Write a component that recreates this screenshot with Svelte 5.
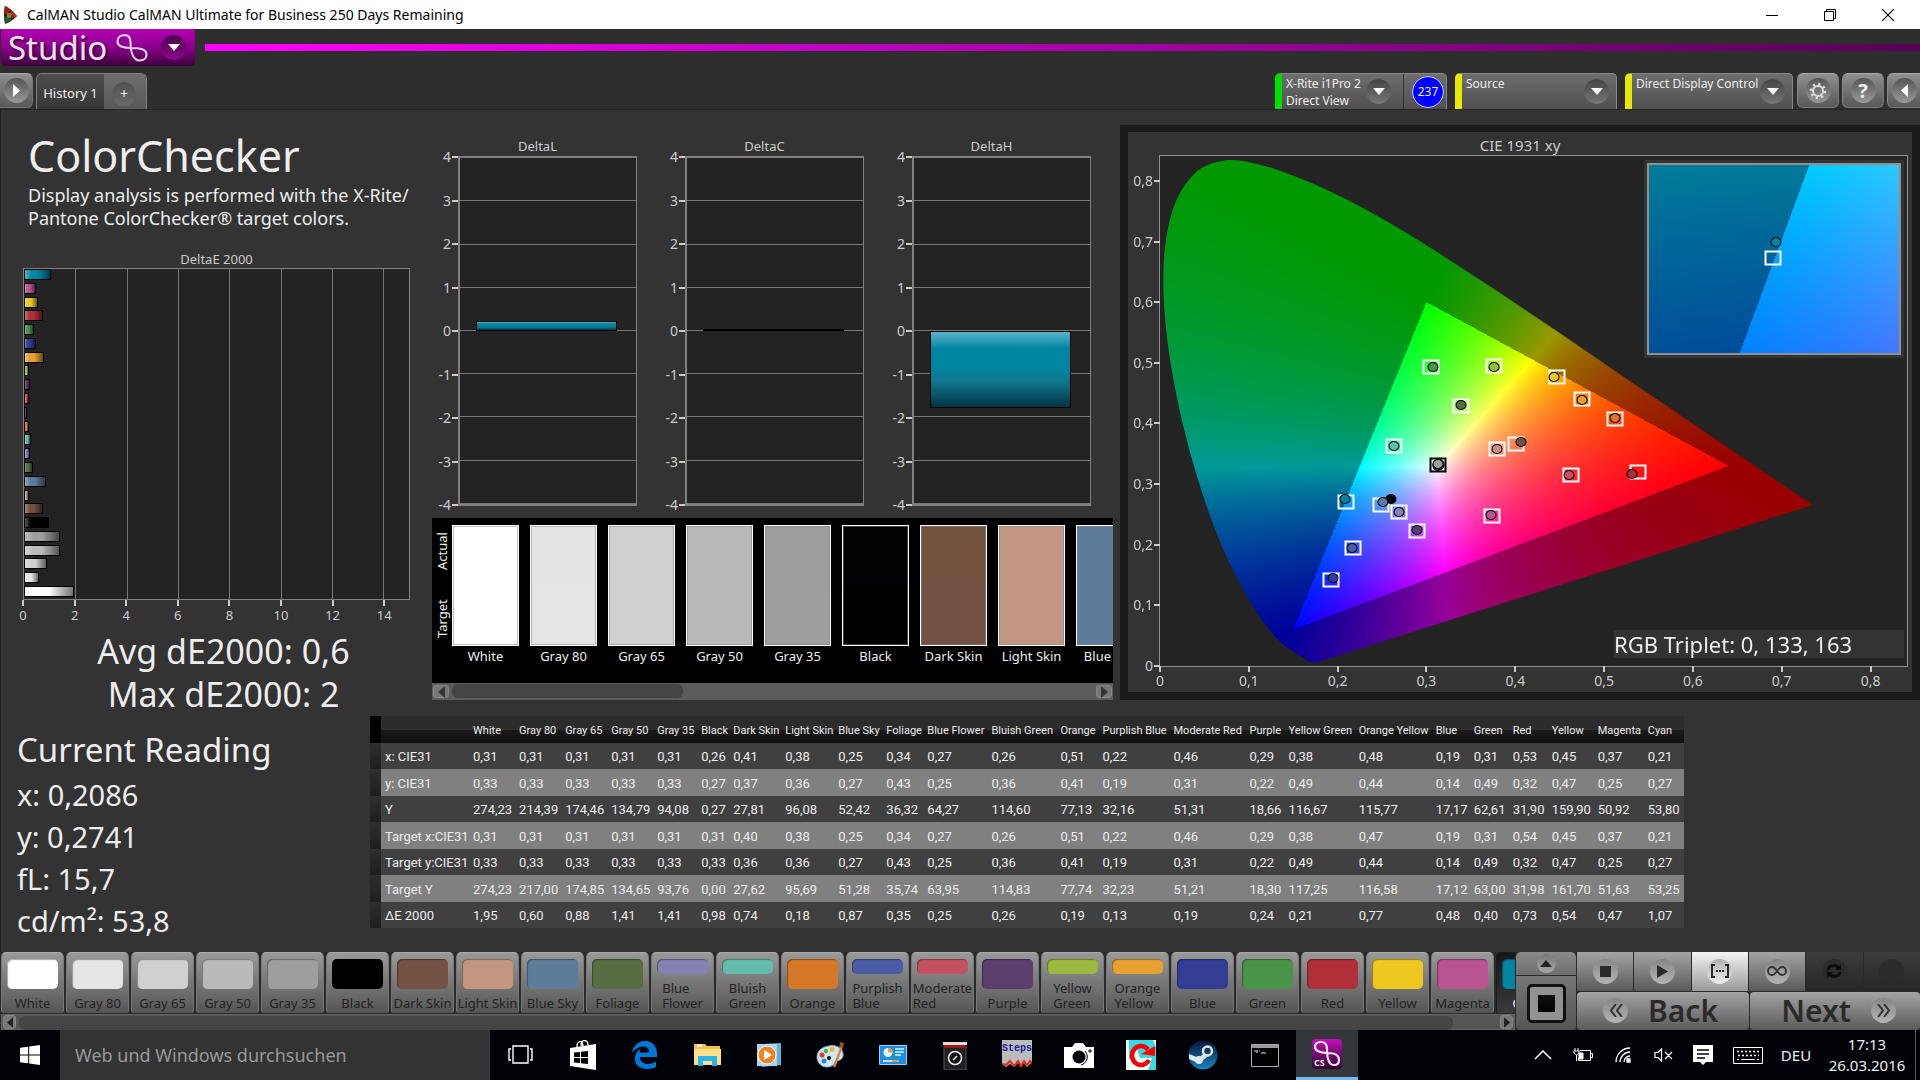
<script lang="ts">
    interface Patch {
        name: string;
        color: string;
        actual?: string;
        col: number;
        values: string[];
        target?: [number, number];
        dot: [number, number];
    }

    interface View {
        x: number;
        y: number;
        w: number;
        h: number;
    }

    const patches: Patch[] = [
        { name: "White", color: "#ffffff", col: 46, values: ["0,31", "0,33", "274,23", "0,31", "0,33", "274,23", "1,95"], dot: [0.313, 0.33] },
        { name: "Gray 80", color: "#e5e5e5", actual: "#e4e5e3", col: 46, values: ["0,31", "0,33", "214,39", "0,31", "0,33", "217,00", "0,60"], dot: [0.313, 0.331] },
        { name: "Gray 65", color: "#d0d0d0", col: 46, values: ["0,31", "0,33", "174,46", "0,31", "0,33", "174,85", "0,88"], dot: [0.314, 0.332] },
        { name: "Gray 50", color: "#bababa", actual: "#b8bbb8", col: 46, values: ["0,31", "0,33", "134,79", "0,31", "0,33", "134,65", "1,41"], dot: [0.314, 0.333] },
        { name: "Gray 35", color: "#9e9e9e", actual: "#9c9f9b", col: 44, values: ["0,31", "0,33", "94,08", "0,31", "0,33", "93,76", "1,41"], target: [0.3128, 0.331], dot: [0.3128, 0.333] },
        { name: "Black", color: "#000000", actual: "#010204", col: 32, values: ["0,26", "0,27", "0,27", "0,31", "0,33", "0,00", "0,98"], dot: [0.26, 0.276] },
        { name: "Dark Skin", color: "#735244", actual: "#735340", col: 52, values: ["0,41", "0,37", "27,81", "0,40", "0,36", "27,62", "0,74"], target: [0.4007, 0.3654], dot: [0.4064, 0.3697] },
        { name: "Light Skin", color: "#c39682", col: 53, values: ["0,38", "0,36", "96,08", "0,38", "0,36", "95,69", "0,18"], target: [0.3795, 0.3586], dot: [0.3795, 0.3586] },
        { name: "Blue Sky", color: "#5e7b9c", col: 48, values: ["0,25", "0,27", "52,42", "0,25", "0,27", "51,28", "0,87"], target: [0.2491, 0.2661], dot: [0.2509, 0.2705] },
        { name: "Foliage", color: "#586c43", col: 41, values: ["0,34", "0,43", "36,32", "0,34", "0,43", "35,74", "0,35"], target: [0.3387, 0.4287], dot: [0.3387, 0.4305] },
        { name: "Blue Flower", color: "#8581b3", col: 64, values: ["0,27", "0,25", "64,27", "0,27", "0,25", "63,95", "0,25"], target: [0.2692, 0.2543], dot: [0.2692, 0.2543] },
        { name: "Bluish Green", color: "#64bcaa", col: 69, values: ["0,26", "0,36", "114,60", "0,26", "0,36", "114,83", "0,26"], target: [0.2635, 0.3635], dot: [0.2635, 0.3635] },
        { name: "Orange", color: "#d67827", col: 42, values: ["0,51", "0,41", "77,13", "0,51", "0,41", "77,74", "0,19"], target: [0.512, 0.407], dot: [0.5126, 0.4094] },
        { name: "Purplish Blue", color: "#4a5ca5", col: 71, values: ["0,22", "0,19", "32,16", "0,22", "0,19", "32,23", "0,13"], target: [0.217, 0.1942], dot: [0.2164, 0.1954] },
        { name: "Moderate Red", color: "#c2525f", col: 76, values: ["0,46", "0,31", "51,31", "0,46", "0,31", "51,21", "0,19"], target: [0.4627, 0.3145], dot: [0.4604, 0.3145] },
        { name: "Purple", color: "#5c3e6c", col: 39, values: ["0,29", "0,22", "18,66", "0,29", "0,22", "18,30", "0,24"], target: [0.2893, 0.2227], dot: [0.2893, 0.2246] },
        { name: "Yellow Green", color: "#9cb93f", col: 70, values: ["0,38", "0,49", "116,67", "0,38", "0,49", "117,25", "0,21"], target: [0.376, 0.495], dot: [0.376, 0.4925] },
        { name: "Orange Yellow", color: "#e7a130", col: 77, values: ["0,48", "0,44", "115,77", "0,47", "0,44", "116,58", "0,77"], target: [0.4747, 0.441], dot: [0.4747, 0.439] },
        { name: "Blue", color: "#333d94", col: 38, values: ["0,19", "0,14", "17,17", "0,19", "0,14", "17,12", "0,48"], target: [0.1923, 0.142], dot: [0.1952, 0.1452] },
        { name: "Green", color: "#489448", col: 39, values: ["0,31", "0,49", "62,61", "0,31", "0,49", "63,00", "0,40"], target: [0.305, 0.4925], dot: [0.307, 0.4925] },
        { name: "Red", color: "#b02f39", col: 39, values: ["0,53", "0,32", "31,90", "0,54", "0,32", "31,98", "0,73"], target: [0.5379, 0.3195], dot: [0.5316, 0.317] },
        { name: "Yellow", color: "#ecc821", col: 46, values: ["0,45", "0,47", "159,90", "0,45", "0,47", "161,70", "0,54"], target: [0.4466, 0.4758], dot: [0.444, 0.477] },
        { name: "Magenta", color: "#ba5391", col: 50, values: ["0,37", "0,25", "50,92", "0,37", "0,25", "51,63", "0,47"], target: [0.3743, 0.2475], dot: [0.3726, 0.2494] },
        { name: "Cyan", color: "#0085a3", col: 40, values: ["0,21", "0,27", "53,80", "0,21", "0,27", "53,25", "1,07"], target: [0.209, 0.271], dot: [0.2078, 0.2754] },
    ];

    const rowNames = ["x: CIE31", "y: CIE31", "Y", "Target x:CIE31", "Target y:CIE31", "Target Y", "ΔE 2000"];
    const toNumber = (text: string) => Number(text.replace(",", "."));
    const bars = [...patches].reverse().map((p) => ({ color: p.color, value: toNumber(p.values[6]) }));
    const twoLines = ["Blue Flower", "Bluish Green", "Purplish Blue", "Moderate Red", "Yellow Green", "Orange Yellow"];

    const deltas = [
        { name: "DeltaL", value: 0.24 },
        { name: "DeltaC", value: 0.04 },
        { name: "DeltaH", value: -1.78 },
    ];
    const deltaTicks = [4, 3, 2, 1, 0, -1, -2, -3, -4];
    const errorTicks = [0, 2, 4, 6, 8, 10, 12, 14];
    const cieTicks = [0, 1, 2, 3, 4, 5, 6, 7, 8];
    const cieView: View = { x: 0, y: 0, w: 0.841, h: 0.841 };
    const insetView: View = { x: 0.1789, y: 0.2399, w: 0.058, h: 0.058 };

    const readings = ["x: 0,2086", "y: 0,2741", "fL: 15,7", "cd/m²: 53,8"];

    // spectral locus, 380 nm to 700 nm
    const locus = [
        0.1741, 0.005, 0.1733, 0.0048, 0.1714, 0.0051, 0.1689, 0.0069, 0.1644, 0.0109, 0.1566, 0.0177, 0.144, 0.0297,
        0.1355, 0.0399, 0.1241, 0.0578, 0.1096, 0.0868, 0.0913, 0.1327, 0.0687, 0.2007, 0.0454, 0.295, 0.0235, 0.4127,
        0.0082, 0.5384, 0.0039, 0.6548, 0.0139, 0.7502, 0.0389, 0.812, 0.0743, 0.8338, 0.1142, 0.8262, 0.1547, 0.8059,
        0.1929, 0.7816, 0.2296, 0.7543, 0.2658, 0.7243, 0.3016, 0.6923, 0.3373, 0.6589, 0.3731, 0.6245, 0.4087, 0.5896,
        0.4441, 0.5547, 0.4788, 0.5202, 0.5125, 0.4866, 0.5448, 0.4544, 0.5752, 0.4242, 0.6029, 0.3965, 0.627, 0.3725,
        0.6658, 0.334, 0.6915, 0.3083, 0.7079, 0.292, 0.719, 0.2809, 0.726, 0.274, 0.7347, 0.2653,
    ];

    function paintGamut(canvas: HTMLCanvasElement, view: View) {
        const ctx = canvas.getContext("2d")!;
        const { width, height } = canvas;
        const image = ctx.createImageData(width, height);

        for (let py = 0; py < height; py++) {
            for (let px = 0; px < width; px++) {
                const x = view.x + ((px + 0.5) / width) * view.w;
                const y = view.y + (1 - (py + 0.5) / height) * view.h;
                const z = 1 - x - y;
                const r = 3.2406 * x - 1.5372 * y - 0.4986 * z;
                const g = -0.9689 * x + 1.8758 * y + 0.0415 * z;
                const b = 0.0557 * x - 0.204 * y + 1.057 * z;
                // colours outside sRGB are dimmed
                const level = (Math.min(r, g, b) < 0 ? 153 : 255) / Math.max(r, g, b);
                const i = (py * width + px) * 4;
                image.data[i] = r * level;
                image.data[i + 1] = g * level;
                image.data[i + 2] = b * level;
                image.data[i + 3] = 255;
            }
        }
        ctx.putImageData(image, 0, 0);

        const points: [number, number][] = [];
        for (let i = 0; i < locus.length; i += 2) {
            points.push([
                ((locus[i] - view.x) / view.w) * width,
                (1 - (locus[i + 1] - view.y) / view.h) * height,
            ]);
        }

        ctx.globalCompositeOperation = "destination-in";
        ctx.beginPath();
        ctx.moveTo(...points[0]);
        for (let i = 0; i < points.length - 1; i++) {
            const a = points[Math.max(i - 1, 0)];
            const b = points[i];
            const c = points[i + 1];
            const d = points[Math.min(i + 2, points.length - 1)];
            ctx.bezierCurveTo(
                b[0] + (c[0] - a[0]) / 6, b[1] + (c[1] - a[1]) / 6,
                c[0] - (d[0] - b[0]) / 6, c[1] - (d[1] - b[1]) / 6,
                c[0], c[1],
            );
        }
        ctx.closePath();
        ctx.fill();
    }

    const place = ([x, y]: [number, number], view: View) =>
        `left: ${((x - view.x) / view.w) * 100}%; bottom: ${((y - view.y) / view.h) * 100}%`;
</script>

<div class="screen">
    <header class="titlebar">
        <svg width="14" height="20" viewBox="0 0 14 20">
            <path d="M2 1Q7 3 14 11Q8 17 2 19Q0 10 2 1Z" fill="#1b1b12" />
            <path d="M2 1Q5 2 8 5L4 9L1 9Q1 4 2 1Z" fill="#a01c14" />
            <path d="M8 6L14 11L10 13L7 10Z" fill="#c42a18" />
            <path d="M2 12L6 11L8 15L2 19Z" fill="#1d5c22" />
            <path d="M4 8h4v5h-4z" fill="#6b8a3a" />
        </svg>
        <h1>CalMAN Studio CalMAN Ultimate for Business 250 Days Remaining</h1>
        <button aria-label="Minimize">
            <svg width="12" height="12" viewBox="0 0 12 12"><path d="M0 6.5h12" stroke="#000" /></svg>
        </button>
        <button aria-label="Restore">
            <svg width="12" height="12" viewBox="0 0 12 12" fill="none" stroke="#000"><path d="M.5 2.5h9v9h-9zM2.5 2.5v-2h9v9h-2" /></svg>
        </button>
        <button aria-label="Close">
            <svg width="12" height="12" viewBox="0 0 12 12"><path d="M0 0L12 12M12 0L0 12" stroke="#000" stroke-width="1.2" /></svg>
        </button>
    </header>

    <div class="brand">
        <button class="studio">
            <span>Studio</span>
            <svg width="32" height="28" viewBox="0 0 32 28" fill="none" stroke="#e0cfe4" stroke-width="2.2">
                <path d="M15 14C9 14 1.500 13 1.500 7.500C1.500 3 5 1.200 8.500 1.200C12.500 1.200 14.500 4 14.500 8C14.500 15 16 26.500 24 26.500C28 26.500 30.500 24 30.500 20.500C30.500 15 24 14 15 14Z" />
            </svg>
            <i class="knob purple"><svg width="12" height="7" viewBox="0 0 12 7"><path d="M0 0h12L6 7z" fill="#fff" /></svg></i>
        </button>
        <div class="line"></div>
    </div>

    <nav class="tabs">
        <button class="square first" aria-label="Expand panel">
            <i class="knob"><svg width="7" height="13" viewBox="0 0 7 13"><path d="M0 0L7 6.500L0 13z" fill="#fff" /></svg></i>
        </button>
        <div class="history">
            <button class="tab">History 1</button>
            <button class="add" aria-label="Add history"><i>+</i></button>
        </div>
        <div class="device meter">
            <button><span>X-Rite i1Pro 2<br />Direct View</span><i class="knob dark"><svg width="12" height="7" viewBox="0 0 12 7"><path d="M0 0h12L6 7z" fill="#fff" /></svg></i></button>
            <div class="count"><b>237</b></div>
        </div>
        <div class="device source">
            <button><span>Source</span><i class="knob dark"><svg width="12" height="7" viewBox="0 0 12 7"><path d="M0 0h12L6 7z" fill="#fff" /></svg></i></button>
        </div>
        <div class="device display">
            <button><span>Direct Display Control</span><i class="knob dark"><svg width="12" height="7" viewBox="0 0 12 7"><path d="M0 0h12L6 7z" fill="#fff" /></svg></i></button>
        </div>
        <button class="square" aria-label="Settings">
            <i class="knob"><svg width="18" height="18" viewBox="0 0 18 18" fill="none" stroke="#ddd"><circle cx="9" cy="9" r="5" stroke-width="2" /><circle cx="9" cy="9" r="7" stroke-width="2.4" stroke-dasharray="2.2 3.3" /></svg></i>
        </button>
        <button class="square help" aria-label="Help"><i class="knob">?</i></button>
        <button class="square last" aria-label="Collapse panel">
            <i class="knob"><svg width="7" height="13" viewBox="0 0 7 13"><path d="M7 0L0 6.500L7 13z" fill="#fff" /></svg></i>
        </button>
    </nav>

    <main>
        <div class="top">
            <section class="summary">
                <h2>ColorChecker</h2>
                <p>Display analysis is performed with the X-Rite/<br />Pantone ColorChecker® target colors.</p>
                <div class="caption">DeltaE 2000</div>
                <div class="errors">
                    {#each errorTicks.slice(1) as tick}
                        <span class="rule" style="left: {(tick / 15) * 100}%"></span>
                    {/each}
                    {#each bars as bar}
                        <span class="bar" style="width: {(bar.value / 15) * 100}%; background-color: {bar.color}"></span>
                    {/each}
                </div>
                <div class="x-axis">
                    {#each errorTicks as tick}
                        <span style="left: {(tick / 15) * 100}%">{tick}</span>
                    {/each}
                </div>
                <div class="average">Avg dE2000: 0,6</div>
                <div class="average">Max dE2000: 2</div>
            </section>

            <section class="middle">
                <div class="deltas">
                    {#each deltas as delta}
                        <div class="delta">
                            <div class="caption">{delta.name}</div>
                            <div class="plot-row">
                                <div class="y-axis">
                                    {#each deltaTicks as tick}
                                        <span>{tick}</span>
                                    {/each}
                                </div>
                                <div class="delta-plot">
                                    <span
                                        class="column"
                                        style="height: {Math.abs(delta.value) * 12.5}%; {delta.value > 0 ? 'bottom' : 'top'}: 50%"
                                    ></span>
                                </div>
                            </div>
                        </div>
                    {/each}
                </div>
                <div class="compare">
                    <div class="sides"><span>Target</span><span>Actual</span></div>
                    <div class="swatches">
                        {#each patches.slice(0, 9) as patch}
                            <figure>
                                <div style="background: linear-gradient({patch.actual ?? patch.color} 50%, {patch.color} 50%)"></div>
                                <figcaption>{patch.name}</figcaption>
                            </figure>
                        {/each}
                    </div>
                </div>
                <div class="scroll">
                    <button aria-label="Scroll left"><svg width="7" height="12" viewBox="0 0 7 12"><path d="M7 0v12L0 6z" fill="#333" /></svg></button>
                    <div class="track"><div class="thumb" style="width: 36%"></div></div>
                    <button aria-label="Scroll right"><svg width="7" height="12" viewBox="0 0 7 12"><path d="M0 0v12L7 6z" fill="#333" /></svg></button>
                </div>
            </section>

            <section class="cie">
                <div class="cie-inner">
                    <div class="caption">CIE 1931 xy</div>
                    <div class="cie-plot">
                        <canvas width="748" height="510" use:paintGamut={cieView}></canvas>
                        {#each cieTicks as tick}
                            <span class="y-tick" style="bottom: {(tick / 8.41) * 100}%">{tick ? `0,${tick}` : "0"}</span>
                            <span class="x-tick" style="left: {(tick / 8.41) * 100}%">{tick ? `0,${tick}` : "0"}</span>
                        {/each}
                        {#each patches as patch}
                            {#if patch.target}
                                <span class="target" class:neutral={patch.name === "Gray 35"} style={place(patch.target, cieView)}></span>
                            {/if}
                        {/each}
                        {#each patches as patch}
                            <span class="dot" style="{place(patch.dot, cieView)}; background: {patch.color}"></span>
                        {/each}
                        <div class="inset">
                            <canvas width="250" height="188" use:paintGamut={insetView}></canvas>
                            <span class="target" style={place([0.2076, 0.2691], insetView)}></span>
                            <span class="dot" style="{place([0.2083, 0.2743], insetView)}; background: #0085a3"></span>
                        </div>
                        <div class="triplet">RGB Triplet: 0, 133, 163</div>
                    </div>
                </div>
            </section>
        </div>

        <div class="data">
            <section class="reading">
                <h3>Current Reading</h3>
                {#each readings as reading}
                    <p>{reading}</p>
                {/each}
            </section>
            <table>
                <colgroup>
                    <col class="grip-col" />
                    <col class="name-col" />
                    {#each patches as patch}
                        <col style="width: {patch.col}px" />
                    {/each}
                </colgroup>
                <thead>
                    <tr>
                        <td class="grip"></td>
                        <td></td>
                        {#each patches as patch}
                            <th scope="col">{patch.name}</th>
                        {/each}
                    </tr>
                </thead>
                <tbody>
                    {#each rowNames as name, row}
                        <tr>
                            <td class="grip"></td>
                            <th scope="row">{name}</th>
                            {#each patches as patch}
                                <td>{patch.values[row]}</td>
                            {/each}
                        </tr>
                    {/each}
                </tbody>
            </table>
        </div>
    </main>

    <div class="controls">
        <div class="picker">
            <div class="patches">
                {#each patches as patch}
                    <button class:double={twoLines.includes(patch.name)} class:selected={patch.name === "Cyan"}>
                        <i style="background: {patch.color}"></i>
                        <span>{patch.name}</span>
                    </button>
                {/each}
            </div>
            <div class="scroll wide">
                <button aria-label="Scroll left"><svg width="6" height="11" viewBox="0 0 7 12"><path d="M7 0v12L0 6z" fill="#222" /></svg></button>
                <div class="track"><div class="thumb" style="width: 97%"></div></div>
                <button aria-label="Scroll right"><svg width="6" height="11" viewBox="0 0 7 12"><path d="M0 0v12L7 6z" fill="#222" /></svg></button>
            </div>
        </div>
        <div class="viewer">
            <button class="up" aria-label="Show pattern list"><i class="knob small"><svg width="12" height="7" viewBox="0 0 12 7"><path d="M0 7h12L6 0z" fill="#222" /></svg></i></button>
            <button class="pattern" aria-label="Pattern window"><i></i></button>
        </div>
        <div class="transport">
            <div class="keys">
                <button aria-label="Stop"><i class="knob light"><svg width="11" height="11" viewBox="0 0 11 11"><path d="M0 0h11v11H0z" fill="#2a2a2a" /></svg></i></button>
                <button aria-label="Play"><i class="knob light"><svg width="12" height="13" viewBox="0 0 12 13"><path d="M1 0L12 6.500L1 13z" fill="#2a2a2a" /></svg></i></button>
                <button class="lit" aria-label="Read series"><i class="knob light"><svg width="20" height="14" viewBox="0 0 20 14" fill="none" stroke="#2a2a2a" stroke-width="2"><path d="M5 1H2v12h3M15 1h3v12h-3" /><path d="M6 7h8" stroke-dasharray="2 1" /></svg></i></button>
                <button aria-label="Read continuous"><i class="knob light"><svg width="20" height="10" viewBox="0 0 20 10" fill="none" stroke="#333" stroke-width="1.8"><path d="M10 5C8 2 7 1 5 1a4 4 0 0 0 0 8C7 9 8 8 10 5C12 2 13 1 15 1a4 4 0 0 1 0 8C13 9 12 8 10 5Z" /></svg></i></button>
                <button class="off" aria-label="Refresh" disabled><i class="knob"><svg width="16" height="16" viewBox="0 0 16 16" fill="none" stroke="#0c0c0c" stroke-width="2.8"><path d="M2 7C2.500 4 5 2.500 8 2.500C10 2.500 11.500 3.300 12.500 4.500M14 9C13.500 12 11 13.500 8 13.500C6 13.500 4.500 12.700 3.500 11.500" /><path d="M15 1v6H9zM1 15V9h6z" fill="#0c0c0c" stroke="none" /></svg></i></button>
                <button class="off" aria-label="No action" disabled><i class="knob"></i></button>
            </div>
            <div class="steps">
                <button class="back">
                    <i class="knob light"><svg width="14" height="13" viewBox="0 0 14 13" fill="none" stroke="#333" stroke-width="2"><path d="M7 0L2 6.500L7 13M13 0L8 6.500L13 13" /></svg></i>
                    <span>Back</span>
                </button>
                <button class="next">
                    <span>Next</span>
                    <i class="knob light"><svg width="14" height="13" viewBox="0 0 14 13" fill="none" stroke="#333" stroke-width="2"><path d="M1 0L6 6.500L1 13M7 0L12 6.500L7 13" /></svg></i>
                </button>
            </div>
        </div>
    </div>

    <footer class="taskbar">
        <button class="start" aria-label="Start">
            <svg width="20" height="20" viewBox="0 0 20 20" fill="#fff"><path d="M0 2.800L8.200 1.700V9.500H0zM9.200 1.500L20 0V9.500H9.200zM0 10.500H8.200V18.300L0 17.200zM9.200 10.500H20V20L9.200 18.500z" /></svg>
        </button>
        <input type="text" placeholder="Web und Windows durchsuchen" aria-label="Web und Windows durchsuchen" />
        <div class="apps">
            <button aria-label="Task view">
                <svg width="26" height="20" viewBox="0 0 26 20" fill="none" stroke="#fff" stroke-width="1.4"><path d="M5 1h15v17H5zM3 4H1v11h2M22 4h2v11h-2" /></svg>
            </button>
            <button aria-label="Store">
                <svg width="28" height="30" viewBox="0 0 28 30"><path d="M1 8L27 4V30L1 26z" fill="#fff" /><path d="M8 7C8 0 14 0 14 6M12 6C12-1 19-1 19 5" fill="none" stroke="#fff" stroke-width="1.4" /><path d="M5 12.500L11 12V17H5zM12 11.800L19 11V17H12zM5 18H11V23L5 22.500zM12 18H19V24L12 23.200z" fill="#000208" /></svg>
            </button>
            <button aria-label="Edge">
                <svg width="26" height="28" viewBox="0 0 26 28" fill="#0078d7"><path d="M0 12C1 5 6 0 13 0C21 0 25 6 25 13V16H8C8 21 12 23 16 23C19 23 22 22 24 20.500V26C22 27.300 18 28 15 28C7 28 2 23 3 16C3.500 12 6 9 9 7.500C8 9 7.700 10 7.600 11.500H17C17 8 15.500 5.500 11.500 5.500C7 5.500 3 8 0 12Z" /></svg>
            </button>
            <button aria-label="Explorer">
                <svg width="29" height="24" viewBox="0 0 29 24"><path d="M1 1h11l2 2h13v18H1z" fill="#f0c44c" /><path d="M1 6h27v16H1z" fill="#ffe08a" /><path d="M4 1.500h5v2H4z" fill="#fff" /><path d="M5 13h19v10h-5v-5h-9v5H5z" fill="#27b4ef" /></svg>
            </button>
            <button aria-label="Media player">
                <svg width="26" height="26" viewBox="0 0 26 26"><path d="M6 2l19-1v22l-19 2z" fill="#5db0d8" /><path d="M1 2h20v22H1z" fill="#a9d8ee" /><circle cx="11" cy="13" r="9" fill="#f28321" stroke="#fff" /><path d="M8 8l8 5l-8 5z" fill="#fff" /></svg>
            </button>
            <button aria-label="Paint">
                <svg width="30" height="28" viewBox="0 0 30 28"><path d="M13 5C22 3 28 9 27 15C26 20 21 19 19 21C18 24 15 26 11 26C5 26 1 21 1 16C1 10 6 6 13 5Z" fill="#cfe6f7" stroke="#7fb0d4" /><circle cx="6" cy="14" r="2.500" fill="#e03a2f" /><circle cx="10" cy="10" r="2.200" fill="#53b13c" /><circle cx="16" cy="8.500" r="2.500" fill="#f6b91c" /><circle cx="8" cy="20" r="2.500" fill="#3c7fd0" /><circle cx="13" cy="17" r="2" fill="#0b1520" /><path d="M26 5L18 26" stroke="#d48c36" stroke-width="2.4" /><path d="M24 1l4 1l-1 5l-4-1z" fill="#8d5223" /></svg>
            </button>
            <button aria-label="Control panel">
                <svg width="28" height="20" viewBox="0 0 28 20"><path d="M.5.500h27v19H.5z" fill="#1f8fe0" stroke="#8ed0ff" /><circle cx="9" cy="7.500" r="4.500" fill="#e8f6ff" /><path d="M9 7.500V3a4.500 4.500 0 0 1 4.500 4.500z" fill="#f59b22" /><path d="M16 4h9M16 7h9M16 10h6" stroke="#d9f0ff" stroke-width="1.5" /><path d="M4 16h16" stroke="#fff" stroke-width="1.5" /><path d="M13 16h7" stroke="#f0a030" stroke-width="2" /></svg>
            </button>
            <button aria-label="Meter">
                <svg width="24" height="29" viewBox="0 0 24 29"><path d="M1 4h22v25H1z" fill="#242022" stroke="#555" /><path d="M0 1h24v3H0z" fill="#ddd" /><path d="M1 4h22v3H1z" fill="#9c1717" /><circle cx="12" cy="17" r="6.500" fill="#111" stroke="#eee" stroke-width="1.5" /><path d="M10 19l4-4" stroke="#fff" stroke-width="1.5" /></svg>
            </button>
            <button class="steps-app" aria-label="Steps">
                <span>Steps</span>
                <svg width="30" height="12" viewBox="0 0 30 12"><path d="M0 6l4 3l4-3l4 3l4-4l3 4l3-4l3 4l5-5v8H0z" fill="#000" /><path d="M0 6l4 1l4-4l4 5l4-5l3 5l3-5l3 4l3-4l2 2" fill="none" stroke="#e22a18" stroke-width="2" /></svg>
            </button>
            <button aria-label="Camera">
                <svg width="30" height="25" viewBox="0 0 30 25"><path d="M0 4h8l3-4h8l3 4h8v21H0z" fill="#fff" /><circle cx="15" cy="14" r="6.500" fill="#000208" /><path d="M21 8a8.500 8.500 0 0 1-4 14" fill="none" stroke="#000208" /><path d="M26 6v4M24 8h4" stroke="#000208" /></svg>
            </button>
            <button aria-label="Sync">
                <svg width="30" height="30" viewBox="0 0 30 30"><path d="M0 0h30v30H0z" fill="#f4ffff" /><path d="M3 0h24l3 8v22h-8l4-12H14L10 6L3 20z" fill="#35dbe2" /><path d="M22 9.500A9 9.500 0 1 0 23 20" fill="none" stroke="#f00" stroke-width="4.5" /><path d="M15 14l14 2V6z" fill="#f00" /></svg>
            </button>
            <button aria-label="Steam">
                <svg width="30" height="30" viewBox="0 0 30 30"><defs><linearGradient id="steam" x2="0" y2="1"><stop stop-color="#0a1433" /><stop offset="1" stop-color="#1686c0" /></linearGradient></defs><circle cx="15" cy="15" r="14.500" fill="url(#steam)" /><circle cx="19.500" cy="11" r="4.500" fill="none" stroke="#dfe8ef" stroke-width="2.5" /><circle cx="11" cy="20" r="4" fill="#dfe8ef" /><path d="M1 14l10 4l5-5l3 4l-6 5l-3 1l-9-4z" fill="#dfe8ef" /></svg>
            </button>
            <button aria-label="Command prompt">
                <svg width="28" height="23" viewBox="0 0 28 23"><path d="M.5.500h27v22H.5z" fill="#000" stroke="#aaa" /><path d="M1 1h26v3H1z" fill="#999" /><path d="M3 7h2M6 6v3M8 7h1M10 9h5" stroke="#ddd" stroke-width="1.2" /></svg>
            </button>
            <button class="active studio-app" aria-label="CalMAN Studio">
                <svg width="30" height="30" viewBox="0 0 30 30" fill="none" stroke="#f0e4f2" stroke-width="2.2"><path d="M16 14C9 14 3 12 3 8C3 4 6 3 9 3C13 3 15 6 15 10C15 18 16 26 22 26C25 26 27 24 27 21C27 16 22 14 16 14Z" /></svg>
                <span>CS</span>
            </button>
        </div>
        <div class="tray">
            <button aria-label="Hidden icons"><svg width="18" height="10" viewBox="0 0 18 10" fill="none" stroke="#fff" stroke-width="1.5"><path d="M1 9L9 1L17 9" /></svg></button>
            <button aria-label="Battery"><svg width="20" height="14" viewBox="0 0 20 14" fill="none" stroke="#fff"><path d="M6.500 2.500h11v10h-12v-3M18 5.500h1.500v4H18" /><path d="M2 0v3M5 0v3M1 3h5v2L3.500 7L1 5zM3.500 7v6" /><path d="M6 5h4v6H6z" fill="#fff" /></svg></button>
            <button aria-label="Network"><svg width="16" height="16" viewBox="0 0 16 16" fill="none" stroke="#fff" stroke-width="1.3"><path d="M1 15A14 14 0 0 1 15 1M5 15A10 10 0 0 1 15 5M9 15A6 6 0 0 1 15 9" /><path d="M12 12h3v3h-3z" fill="#fff" /></svg></button>
            <button aria-label="Volume"><svg width="19" height="14" viewBox="0 0 19 14" fill="none" stroke="#fff" stroke-width="1.2"><path d="M1 4.500h3L7.500 1v12L4 9.500H1zM11 4l7 7M18 4l-7 7" /></svg></button>
            <button aria-label="Notifications"><svg width="20" height="20" viewBox="0 0 20 20"><path d="M0 0h20v17h-7l-3 3l-3-3H0z" fill="#fff" /><path d="M4 5h12M4 9h12M4 13h8" stroke="#000208" stroke-width="1.4" /></svg></button>
            <button class="keyboard" aria-label="Keyboard"><svg width="30" height="17" viewBox="0 0 30 17" fill="none" stroke="#fff"><path d="M.5.500h29v16H.5z" /><path d="M4 4.500h22M5 8.500h21" stroke-dasharray="2 2" stroke-width="1.5" /><path d="M4 12.500h2M8 12.500h14M24 12.500h2" /></svg></button>
            <button class="lang">DEU</button>
            <button class="clock">17:13<br />26.03.2016</button>
        </div>
    </footer>
</div>

<style>
    :global(body) {
        margin: 0;
        background: #333;
    }

    .screen {
        display: flex;
        flex-direction: column;
        min-height: 100vh;
        overflow: hidden;
        background: #333;
        color: #eee;
        font-family: "Noto Sans", "Open Sans", sans-serif;
        font-size: 14px;
    }

    .screen :global(*) {
        box-sizing: border-box;
    }

    button {
        margin: 0;
        padding: 0;
        border: 0;
        background: none;
        color: inherit;
        font: inherit;
    }

    i {
        font-style: normal;
    }

    svg,
    canvas {
        display: block;
    }

    h1,
    h2,
    h3,
    p,
    figure {
        margin: 0;
        font-weight: 400;
    }

    /* title bar */
    .titlebar {
        display: flex;
        align-items: center;
        height: 29px;
        padding-left: 3px;
        gap: 10px;
        background: #fff;
        color: #000;
    }

    .titlebar h1 {
        flex: 1;
        font-size: 14px;
        line-height: 28px;
    }

    .titlebar button {
        display: flex;
        justify-content: center;
        width: 48px;
    }

    .titlebar button:last-child {
        margin-right: 8px;
    }

    /* header */
    .brand {
        display: flex;
        gap: 10px;
        height: 44px;
        padding-left: 1px;
        background: #2e2e2e;
    }

    .studio {
        display: flex;
        align-items: center;
        gap: 9px;
        width: 194px;
        height: 37px;
        padding-left: 7px;
        border-radius: 0 0 5px 5px;
        background: linear-gradient(#b400b4, #8a008a 50%, #3c003c);
        color: #f0e4f2;
        font-size: 33px;
        line-height: 34px;
        text-shadow: 2px 2px 2px #400040;
    }

    .line {
        flex: 1;
        height: 7px;
        margin-top: 15px;
        background: linear-gradient(90deg, #f0f, #550055);
    }

    .knob {
        display: flex;
        align-items: center;
        justify-content: center;
        width: 25px;
        height: 25px;
        border-radius: 50%;
        background: linear-gradient(#555, #999);
    }

    .knob.purple {
        margin-left: 4px;
        background: linear-gradient(#4b004b, #8c0a8c);
    }

    .knob.dark {
        background: linear-gradient(#444, #777);
    }

    .knob.light {
        background: linear-gradient(#858585, #b5b5b5);
    }

    .knob.small {
        width: 19px;
        height: 19px;
        background: linear-gradient(#777, #aaa);
    }

    .tabs {
        display: flex;
        height: 37px;
        background: #2e2e2e;
        border-bottom: 1px solid #252525;
    }

    .square {
        display: flex;
        align-items: center;
        justify-content: center;
        width: 42px;
        height: 35px;
        margin-right: 3px;
        border: 1px solid #999;
        border-color: #aaa #777 #777 #888;
        border-radius: 6px;
        background: linear-gradient(#8f8f8f, #585858);
    }

    .square.first {
        justify-content: flex-start;
        width: 33px;
        padding-left: 4px;
        border-left: 0;
        border-radius: 0 6px 6px 0;
    }

    .square.last {
        width: 33px;
        margin-right: 0;
        border-right: 0;
        border-radius: 6px 0 0 6px;
    }

    .square.help {
        font-size: 20px;
        font-weight: 700;
    }

    .history {
        display: flex;
        margin-right: auto;
        border: 1px solid #808080;
        border-bottom: 0;
        border-radius: 6px 6px 0 0;
        background: #4a4a4a;
        overflow: hidden;
    }

    .tab {
        width: 67px;
        padding-top: 3px;
        background: linear-gradient(#4e4e4e, #363636);
        font-size: 13px;
        white-space: nowrap;
    }

    .add {
        width: 42px;
        padding: 5px 0 0 8px;
        background: linear-gradient(#6e6e6e, #585858);
    }

    .add i {
        display: block;
        width: 24px;
        height: 24px;
        border-radius: 50%;
        background: linear-gradient(#505050, #6a6a6a);
        line-height: 24px;
    }

    .device {
        display: flex;
        width: 162px;
        margin-right: 8px;
        border: 1px solid #888;
        border-bottom: 0;
        border-left: 7px solid #e8e800;
        border-radius: 5px 5px 0 0;
        background: linear-gradient(#6e6e6e, #505050);
    }

    .device.meter {
        width: 172px;
        border-left-color: #00e000;
    }

    .device.display {
        width: 168px;
        margin-right: 4px;
    }

    .device button {
        display: flex;
        flex: 1;
        align-items: flex-start;
        justify-content: space-between;
        padding: 1px 7px 0 4px;
        font-size: 12px;
        line-height: 17px;
        text-align: left;
        white-space: nowrap;
    }

    .device .knob {
        flex: none;
        margin-top: 4px;
    }

    .device.meter button {
        padding-right: 12px;
    }

    .count {
        padding: 2px 2px 0 8px;
        border-left: 1px solid #333;
    }

    .count b {
        display: block;
        width: 32px;
        height: 32px;
        border: 1px solid #ccf;
        border-radius: 50%;
        background: #00f;
        font-size: 12px;
        font-weight: 400;
        line-height: 30px;
        text-align: center;
    }

    /* main area */
    main {
        flex: 1;
        border-left: 1px solid #222;
    }

    .top {
        display: grid;
        grid-template-columns: 431fr 688fr 800fr;
        height: 606px;
    }

    .caption {
        color: #ccc;
        font-size: 13px;
        line-height: 18px;
        text-align: center;
    }

    .summary {
        min-width: 0;
        padding: 18px 22px 0 22px;
    }

    .summary h2 {
        padding-left: 5px;
        font-size: 43px;
        line-height: 56px;
        white-space: nowrap;
    }

    .summary p {
        padding-left: 5px;
        font-size: 18px;
        line-height: 23px;
        white-space: nowrap;
    }

    .summary .caption {
        margin-top: 20px;
    }

    .errors {
        position: relative;
        display: flex;
        flex-direction: column;
        justify-content: space-between;
        height: 332px;
        padding-bottom: 2px;
        border: 1px solid #808080;
        background: #232323;
    }

    .rule {
        position: absolute;
        top: 0;
        bottom: 0;
        width: 1px;
        background: #777;
    }

    .bar {
        position: relative;
        height: 11px;
        border: 1px solid #000;
        background-image: linear-gradient(90deg, rgb(255 255 255 / 0.35), transparent 25%, transparent 50%, rgb(0 0 0 / 0.55));
    }

    .x-axis {
        position: relative;
        height: 30px;
        color: #ccc;
    }

    .x-axis span {
        position: absolute;
        width: 40px;
        margin-left: -20px;
        font-size: 13px;
        line-height: 19px;
        text-align: center;
    }

    .x-axis span::before {
        content: "";
        display: block;
        width: 2px;
        height: 6px;
        margin: 0 auto;
        background: #ccc;
    }

    .average {
        padding-left: 14px;
        font-size: 34px;
        line-height: 43px;
        text-align: center;
    }

    .middle {
        display: flex;
        flex-direction: column;
        min-width: 0;
        padding: 27px 7px 0 0;
    }

    .deltas {
        display: flex;
        height: 381px;
    }

    .delta {
        flex: 1;
    }

    .delta .caption {
        padding-right: 16px;
    }

    .plot-row {
        display: flex;
        height: 350px;
        margin-top: 1px;
        padding-right: 22px;
    }

    .y-axis {
        display: flex;
        flex-direction: column;
        justify-content: space-between;
        width: 26px;
        margin: -7px 0;
        color: #ccc;
        line-height: 16px;
        text-align: right;
    }

    .y-axis span::after {
        content: "";
        display: inline-block;
        width: 6px;
        height: 2px;
        margin-left: 1px;
        background: #ccc;
        vertical-align: 4px;
    }

    .delta-plot {
        position: relative;
        flex: 1;
        border: 2px solid #808080;
        border-right-width: 1px;
        background: repeating-linear-gradient(transparent 0, transparent calc(12.5% - 1px), #777 calc(12.5% - 1px), #777 12.5%) #232323;
    }

    .column {
        position: absolute;
        left: 9%;
        width: 80%;
        border: 1px solid #000;
        background: linear-gradient(#5cb5cb, #0085a3 22%, #0085a3 45%, #0f7890 65%, #003444);
    }

    .compare {
        display: flex;
        height: 165px;
        background: #000;
    }

    .sides {
        display: flex;
        justify-content: space-between;
        width: 20px;
        height: 130px;
        padding: 10px 0 14px;
        font-size: 13px;
        line-height: 20px;
        writing-mode: vertical-rl;
        transform: rotate(180deg);
    }

    .swatches {
        display: flex;
        flex: 1;
        gap: 11px;
        min-width: 0;
        padding-top: 7px;
        overflow: hidden;
    }

    .swatches figure {
        flex: none;
        width: 67px;
    }

    .swatches figure div {
        height: 121px;
        border: 1px solid #fff;
        box-shadow: inset 0 0 0 1px rgb(128 128 128 / 0.5);
    }

    .swatches figcaption {
        font-size: 13px;
        line-height: 20px;
        text-align: center;
        white-space: nowrap;
    }

    .scroll {
        display: flex;
        height: 17px;
        background: #5c5c5c;
    }

    .scroll button {
        display: flex;
        align-items: center;
        justify-content: center;
        width: 16px;
        margin: 2px 1px;
        border: 1px solid #888;
        border-radius: 3px;
        background: #777;
    }

    .track {
        flex: 1;
        padding: 1px 2px;
    }

    .thumb {
        height: 14px;
        border-radius: 6px;
        background: #444;
    }

    .cie {
        min-width: 0;
        height: 575px;
        margin-top: 15px;
        padding: 7px 8px 8px;
        background: #1a1a1a;
    }

    .cie-inner {
        height: 100%;
        padding: 4px 4px 0 31px;
        background: #333;
    }

    .cie-inner .caption {
        padding-right: 27px;
        font-size: 15px;
        line-height: 19px;
    }

    .cie-plot {
        position: relative;
        height: 512px;
        border: 1px solid #909090;
        background: #232323;
    }

    canvas {
        width: 100%;
        height: 100%;
    }

    .x-tick,
    .y-tick {
        position: absolute;
        color: #ccc;
        line-height: 18px;
        text-align: center;
    }

    .x-tick {
        top: 100%;
        width: 40px;
        margin-left: -20px;
    }

    .x-tick::before {
        content: "";
        display: block;
        width: 2px;
        height: 6px;
        margin: 0 auto;
        background: #ccc;
    }

    .y-tick {
        right: 100%;
        display: flex;
        align-items: center;
        gap: 1px;
        margin-bottom: -9px;
    }

    .y-tick::after {
        content: "";
        width: 6px;
        height: 2px;
        background: #ccc;
    }

    .target,
    .dot {
        position: absolute;
        transform: translate(-50%, 50%);
    }

    .target {
        width: 17px;
        height: 15px;
        border: 2px solid #fff;
    }

    .target.neutral {
        border-color: #000;
    }

    .dot {
        width: 11px;
        height: 10px;
        border: 1px solid #000;
        border-radius: 50%;
    }

    .inset {
        position: absolute;
        top: 7px;
        right: 6px;
        width: 254px;
        height: 192px;
        border: 2px solid #909090;
        outline: 3px solid #333;
    }

    .triplet {
        position: absolute;
        right: 3px;
        bottom: 8px;
        width: 290px;
        background: #333;
        font-size: 22px;
        line-height: 28px;
        white-space: nowrap;
    }

    /* readings */
    .data {
        display: flex;
        align-items: flex-start;
    }

    .reading {
        width: 369px;
        padding: 10px 0 0 16px;
        font-size: 29px;
    }

    .reading h3 {
        font-size: 33px;
        line-height: 48px;
    }

    .reading p {
        line-height: 42px;
    }

    table {
        width: 1314px;
        border-collapse: collapse;
        table-layout: fixed;
        background: #404040;
        font-family: Roboto, "Noto Sans", sans-serif;
        font-size: 13px;
    }

    .grip-col {
        width: 11px;
    }

    .name-col {
        width: 88px;
    }

    th,
    td {
        padding: 2px 0 0 4px;
        font-weight: 400;
        line-height: 24px;
        text-align: left;
        white-space: nowrap;
    }

    thead tr {
        height: 27px;
        background: linear-gradient(#2c2c2c 50%, #1a1a1a 50%, #101010);
        font-size: 11px;
    }

    thead .grip {
        background: #000;
    }

    tbody tr:nth-child(even) {
        height: 27px;
        background: #808080;
    }

    tbody .grip {
        background: linear-gradient(#2e2e2e, #1e1e1e);
    }

    /* bottom controls */
    .controls {
        display: flex;
        height: 78px;
        gap: 1px;
        background: #2a2a2a;
    }

    .picker {
        flex: 1;
        min-width: 0;
        padding-left: 1px;
    }

    .patches {
        display: flex;
        gap: 2px;
        height: 62px;
        overflow: hidden;
    }

    .patches button {
        display: flex;
        flex: none;
        flex-direction: column;
        align-items: center;
        justify-content: space-between;
        width: 63px;
        height: 61px;
        padding: 6px 0 2px;
        border: 1px solid #777;
        border-top-color: #aaa;
        border-bottom: 0;
        border-radius: 5px 5px 3px 3px;
        background: linear-gradient(#999, #555);
        color: #222;
        font-size: 13px;
        line-height: 15px;
        text-align: left;
    }

    .patches i {
        width: 51px;
        height: 30px;
        border-radius: 5px;
        box-shadow: inset 1px 1px 1px rgb(0 0 0 / 0.35);
    }

    .patches span {
        white-space: nowrap;
    }

    .patches .double i {
        height: 15px;
    }

    .patches .double span {
        width: min-content;
        white-space: normal;
    }

    .patches .selected {
        border-color: #1a1a1a;
        background: linear-gradient(#181818, #3a3a3a);
        color: #fff;
    }

    .scroll.wide {
        height: 16px;
        border: 1px solid #666;
        background: #555;
    }

    .wide button {
        width: 13px;
        margin: 0 1px;
    }

    .viewer {
        display: flex;
        flex-direction: column;
        gap: 1px;
        width: 60px;
    }

    .viewer button {
        display: flex;
        align-items: center;
        justify-content: center;
    }

    .up {
        height: 23px;
        border-radius: 5px 5px 0 0;
        background: linear-gradient(#8a8a8a, #6e6e6e);
    }

    .pattern {
        flex: 1;
        border-radius: 0 0 4px 4px;
        background: linear-gradient(#777, #555);
    }

    .pattern i {
        width: 39px;
        height: 39px;
        border: 3px solid #111;
        border-radius: 5px;
        background: linear-gradient(#111, #000) center / 17px 17px no-repeat #929292;
    }

    .transport {
        display: flex;
        flex-direction: column;
        gap: 1px;
        width: 343px;
    }

    .keys,
    .steps {
        display: flex;
        flex: 1;
        gap: 1px;
    }

    .keys button,
    .steps button {
        display: flex;
        flex: 1;
        align-items: center;
        justify-content: center;
        background: linear-gradient(#a4a4a4, #5a5a5a);
    }

    .keys .lit {
        background: linear-gradient(#f4f4f4, #999);
    }

    .lit .knob {
        background: linear-gradient(#b0b0b0, #eee);
    }

    .keys .off {
        background: linear-gradient(#3c3c3c, #262626);
    }

    .off .knob {
        background: #2c2c2c;
    }

    .steps button {
        gap: 20px;
        border-radius: 4px;
        color: #2a2a2a;
        font-size: 30px;
        font-weight: 600;
        line-height: 36px;
    }

    .steps .back {
        justify-content: flex-start;
        padding-left: 26px;
    }

    .steps .next {
        justify-content: flex-end;
        padding-right: 24px;
    }

    /* taskbar */
    .taskbar {
        display: flex;
        height: 50px;
        background: #000208;
    }

    .taskbar button {
        display: flex;
        align-items: center;
        justify-content: center;
    }

    .start {
        width: 60px;
    }

    .taskbar input {
        width: 430px;
        padding: 0 0 0 15px;
        border: 0;
        border-radius: 0;
        background: #333;
        font: inherit;
        font-size: 18px;
    }

    .taskbar input::placeholder {
        color: #999;
    }

    .apps {
        display: flex;
        margin-right: auto;
    }

    .apps button {
        width: 62px;
    }

    .taskbar .steps-app {
        flex-direction: column;
    }

    .steps-app span {
        width: 30px;
        height: 18px;
        background: #bbb;
        color: #1a1a9c;
        font: 700 10px/18px "Liberation Mono", monospace;
        text-align: center;
    }

    .steps-app svg {
        background: #bbb;
    }

    .apps .studio-app {
        position: relative;
        border-bottom: 3px solid #76b9ed;
        background: #33363b;
    }

    .studio-app svg {
        border-radius: 4px;
        background: linear-gradient(#c010b8, #2e0030);
    }

    .studio-app span {
        position: absolute;
        bottom: 9px;
        left: 18px;
        font-size: 9px;
        font-weight: 700;
        line-height: 10px;
    }

    .tray {
        display: flex;
        margin-right: 4px;
        border-right: 1px solid #555;
    }

    .tray button {
        width: 40px;
        font-size: 15px;
    }

    .tray .keyboard {
        width: 50px;
    }

    .tray .lang {
        width: 46px;
    }

    .tray .clock {
        width: 96px;
        line-height: 21px;
    }
</style>
